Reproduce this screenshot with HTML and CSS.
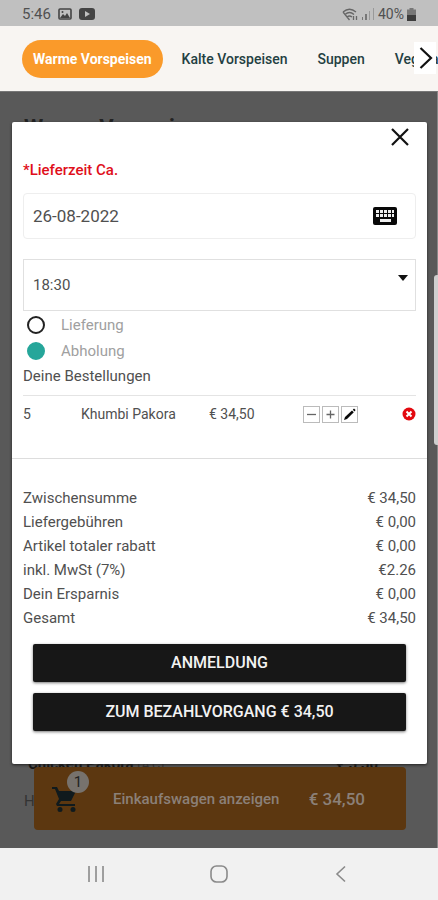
FILE: index.html
```html
<!DOCTYPE html>
<html lang="de">
<head>
<meta charset="utf-8">
<meta name="viewport" content="width=device-width, initial-scale=1">
<title>Warenkorb</title>
<link rel="stylesheet" href="styles.css">
</head>
<body>
<header class="status">
  <div class="status-group">
    <span class="clock">5:46</span>
    <svg width="14" height="12" viewBox="0 0 14 12"><rect x="1" y="1" width="12" height="10" rx="1" fill="none" stroke="#444" stroke-width="1.6"/><path d="M2 10l3-4 2 2 2-3 3 5z" fill="#444"/><circle cx="4.500" cy="4" r="1" fill="#444"/></svg>
    <svg width="16" height="12" viewBox="0 0 16 12"><rect width="16" height="12" rx="3" fill="#444"/><path d="M6 3l5 3-5 3z" fill="#c0c0c0"/></svg>
  </div>
  <div class="status-group status-right">
    <svg width="16" height="13" viewBox="0 0 16 13" fill="none" stroke="#666" stroke-width="1.300"><path d="M1 4Q7.500-1.500 14 4M3 6.500q4.500-4 9 0M5 9q2.500-2 5 0M7.500 12L1 4M11.500 8v4M14.500 8v4"/></svg>
    <svg width="14" height="12" viewBox="0 0 14 12" fill="#777"><rect x="1" y="9" width="1" height="3"/><rect x="4" y="6" width="2" height="6"/><rect x="8" y="3" width="1" height="9" fill="#999"/><rect x="12" y="0" width="1" height="12" fill="#999"/></svg>
    <span class="battery">40%</span>
    <svg width="9" height="13" viewBox="0 0 9 13"><path d="M2.500 0h4v1.500H9V13H0V1.500h2.500z" fill="#777"/><path d="M0 7h9v6H0z" fill="#3c3c3c"/></svg>
  </div>
</header>
<nav class="tabs">
  <a class="tab tab-active" href="#warm">Warme Vorspeisen</a>
  <a class="tab" href="#kalt">Kalte Vorspeisen</a>
  <a class="tab" href="#suppen">Suppen</a>
  <a class="tab" href="#veg">Vegetarische</a>
  <button class="tabs-next" type="button" aria-label="Weiter"><svg width="14" height="24" viewBox="0 0 14 24"><path d="M1.500 2l10.500 10L1.500 22" fill="none" stroke="#111" stroke-width="2.200"/></svg></button>
</nav>
<main class="stage">
  <section class="menu">
    <h1 class="menu-title">Warme Vorspeisen</h1>
    <div class="menu-end">
      <p class="dish"><b>Chicken Pakora <small>(A,C)</small></b><b>€ 5,50</b></p>
      <p class="dish-note">Hühnerfleisch</p>
    </div>
    <a class="cart" href="#cart">
      <span class="cart-icon">
        <svg width="28" height="28" viewBox="0 0 28 28"><path d="M1 2h5l2 4h17l-5 10H10l-2 3h16v2H6l-1-2 3-5L4 4H1z" fill="#101a1d"/><circle cx="9" cy="24.500" r="2.500" fill="#101a1d"/><circle cx="22" cy="24.500" r="2.500" fill="#101a1d"/></svg>
        <span class="badge">1</span>
      </span>
      <span class="cart-label">Einkaufswagen anzeigen</span>
      <span class="cart-sum">€ 34,50</span>
    </a>
  </section>
  <div class="scroll-thumb"></div>
  <form class="dialog" role="dialog" aria-label="Bestellung">
    <button class="close" type="button" aria-label="Schließen"><svg width="20" height="20" viewBox="0 0 20 20"><path d="M2 2l16 16M18 2L2 18" stroke="#111" stroke-width="2.200"/></svg></button>
    <label class="due" for="date">*Lieferzeit Ca.</label>
    <div class="date-box">
      <input class="date" id="date" type="text" value="26-08-2022">
      <button class="plain" type="button" aria-label="Tastatur"><svg width="26" height="18" viewBox="0 0 26 18"><rect x="1" width="24" height="18" rx="2" fill="#080808"/><path d="M4 3h3v3H4zM8 3h3v3H8zM12 3h3v3h-3zM16 3h3v3h-3zM20 3h2v3h-2zM4 7h3v3H4zM8 7h3v3H8zM12 7h3v3h-3zM16 7h3v3h-3zM20 7h2v3h-2zM8 12h11v3H8z" fill="#eee"/></svg></button>
    </div>
    <div class="time-box">
      <select class="time" aria-label="Uhrzeit"><option>18:30</option></select>
      <svg class="caret" width="10" height="6" viewBox="0 0 10 6"><path d="M0 0h10L5 6z" fill="#111"/></svg>
    </div>
    <label class="choice"><input type="radio" name="art">Lieferung</label>
    <label class="choice"><input type="radio" name="art" checked>Abholung</label>
    <h2 class="orders-title">Deine Bestellungen</h2>
    <div class="order">
      <span>5</span><span>Khumbi Pakora</span><span>€ 34,50</span>
      <span class="tools">
        <button type="button" aria-label="Weniger"><svg width="15" height="15" viewBox="0 0 15 15"><path d="M3 7.500h9" stroke="#666" stroke-width="1.300"/></svg></button>
        <button type="button" aria-label="Mehr"><svg width="15" height="15" viewBox="0 0 15 15"><path d="M3.500 7.500h8M7.500 3.500v8" stroke="#666" stroke-width="1.300"/></svg></button>
        <button type="button" aria-label="Bearbeiten"><svg width="15" height="15" viewBox="0 0 15 15"><path d="M2 13l1-3L10 3.500 11.800 5.300 5 12zM10.800 2.700L12 1.500 13.600 3.100 12.500 4.500z" fill="#080808"/></svg></button>
      </span>
      <button class="plain remove" type="button" aria-label="Entfernen"><svg width="14" height="14" viewBox="0 0 14 14"><circle cx="7" cy="7" r="6.500" fill="#e3090f"/><path d="M4.500 4.500l5 5M9.500 4.500l-5 5" stroke="#fff" stroke-width="2"/></svg></button>
    </div>
    <dl class="totals">
      <dt>Zwischensumme</dt><dd>€ 34,50</dd>
      <dt>Liefergebühren</dt><dd>€ 0,00</dd>
      <dt>Artikel totaler rabatt</dt><dd>€ 0,00</dd>
      <dt>inkl. MwSt (7%)</dt><dd>€2.26</dd>
      <dt>Dein Ersparnis</dt><dd>€ 0,00</dd>
      <dt>Gesamt</dt><dd>€ 34,50</dd>
    </dl>
    <div class="actions">
      <button class="action" type="button">ANMELDUNG</button>
      <button class="action" type="button">ZUM BEZAHLVORGANG € 34,50</button>
    </div>
  </form>
</main>
<footer class="system">
  <button class="plain" type="button" aria-label="Letzte Apps"><svg width="18" height="18" viewBox="0 0 18 18"><path d="M2 1v16M9 1v16M16 1v16" stroke="#8a8a8a" stroke-width="1.600"/></svg></button>
  <button class="plain" type="button" aria-label="Startseite"><svg width="18" height="18" viewBox="0 0 18 18"><rect x="1" y="1" width="16" height="16" rx="5.500" fill="none" stroke="#8a8a8a" stroke-width="1.600"/></svg></button>
  <button class="plain" type="button" aria-label="Zurück"><svg width="18" height="18" viewBox="0 0 18 18"><path d="M13 1.500L5 9l8 7.500" fill="none" stroke="#8a8a8a" stroke-width="1.600"/></svg></button>
</footer>
</body>
</html>
```
FILE: styles.css
```css
* { box-sizing: border-box; }
body {
  margin: 0;
  min-height: 100vh;
  display: flex;
  flex-direction: column;
  overflow-x: hidden;
  font: 15px/24px Roboto, "Liberation Sans", sans-serif;
  color: #505050;
  background: #fff;
}
svg { display: block; flex: none; }
button, input, select { font: inherit; color: inherit; }
.plain { border: 0; padding: 0; background: none; }

.status {
  display: flex;
  justify-content: space-between;
  align-items: center;
  height: 26px;
  padding: 2px 22px 0;
  background: #c0c0c0;
}
.status-group { display: flex; align-items: center; gap: 7px; color: #505050; }
.status-right { gap: 3px; }
.battery { font-size: 14px; }

.tabs {
  position: relative;
  display: flex;
  align-items: center;
  height: 65px;
  padding-left: 22px;
  overflow: hidden;
  background: #f8f5f2;
}
.tab {
  flex: none;
  padding: 0 11px;
  margin-right: 8px;
  border-radius: 19px;
  line-height: 38px;
  font-size: 14px;
  font-weight: 500;
  color: #243f42;
  text-decoration: none;
}
.tab-active { background: #fa9a2a; color: #fff; font-weight: 700; }
.tabs-next {
  position: absolute;
  top: 16px;
  right: 2px;
  width: 22px;
  height: 32px;
  padding: 0 5px;
  border: 0;
  background: #fff;
}

.stage { position: relative; flex: 1; display: flex; flex-direction: column; background: #595959; }
.menu {
  flex: 1;
  display: flex;
  flex-direction: column;
  padding: 22px 31px 18px 24px;
  border-top: 1px solid #777;
  border-right: 1px solid #888;
}
.menu-title { margin: 0; font-size: 22px; line-height: 28px; color: #222; }
.menu-end { margin: auto 0 0; }
.dish { display: flex; justify-content: space-between; margin: 0 0 12px 4px; padding-right: 28px; line-height: 24px; color: #161616; }
.dish small { color: #333; font-weight: 400; }
.dish-note { margin: 0; color: #333; }
.cart {
  display: flex;
  align-items: center;
  margin: -46px 0 0 10px;
  height: 63px;
  padding: 0 41px 0 17px;
  border-radius: 4px;
  background: #5c3710;
  color: #8b8078;
  text-decoration: none;
  font-weight: 500;
}
.cart-icon { position: relative; margin-right: 34px; }
.badge {
  position: absolute;
  top: -14px;
  left: 16px;
  width: 22px;
  border-radius: 11px;
  background: #77726d;
  color: #222;
  font-weight: 400;
  line-height: 22px;
  text-align: center;
}
.cart-label { flex: 1; }
.cart-sum { font-size: 17px; }
.scroll-thumb {
  position: absolute;
  top: 184px;
  right: 0;
  width: 4px;
  height: 170px;
  border-radius: 3px 0 0 3px;
  background: #cfcfcf;
}

.dialog {
  position: absolute;
  top: 31px;
  left: 12px;
  right: 11px;
  display: flex;
  flex-direction: column;
  padding: 5px 11px 33px;
  border-radius: 2px;
  background: #fff;
  box-shadow: 0 1px 3px #222;
}
.close { align-self: flex-end; margin: 0 6px 0 0; padding: 0; border: 0; background: none; }
.due { margin: 11px 0; font-weight: 500; color: #e00f1b; }
.date-box {
  display: flex;
  align-items: center;
  height: 46px;
  margin-bottom: 20px;
  padding: 0 17px 0 9px;
  border: 1px solid #eee;
  border-radius: 4px;
}
.date { flex: 1; min-width: 0; padding: 0; border: 0; outline: 0; background: none; font-size: 17px; }
.time-box { position: relative; margin-bottom: 1px; }
.time {
  display: block;
  width: 100%;
  height: 52px;
  padding: 0 9px;
  border: 1px solid #e0e0e0;
  border-radius: 0;
  background: #fff;
  appearance: none;
}
.caret { position: absolute; top: 16px; right: 8px; pointer-events: none; }
.choice { display: flex; align-items: center; gap: 16px; height: 26px; padding-left: 4px; color: #a0a0a0; }
.choice input {
  appearance: none;
  width: 18px;
  height: 18px;
  margin: 0;
  border: 2px solid #222;
  border-radius: 50%;
}
.choice input:checked { border-color: #26a69a; background: #26a69a; }
.orders-title { margin: 0 0 7px; font-size: 15px; font-weight: 400; }
.order {
  display: grid;
  grid-template-columns: 58px 128px 94px auto 1fr;
  align-items: center;
  height: 63px;
  padding-bottom: 26px;
  border-top: 1px solid #e4e4e4;
  font-size: 14px;
}
.tools { display: flex; gap: 2px; }
.tools button { padding: 0; border: 1px solid #bbb; background: #fff; }
.remove { justify-self: end; }
.totals {
  display: grid;
  grid-template-columns: 1fr auto;
  margin: 0 -11px;
  padding: 27px 11px 0;
  border-top: 1px solid #ddd;
}
.totals dd { margin: 0; text-align: right; }
.actions { display: flex; flex-direction: column; gap: 11px; padding: 14px 10px 0; }
.action {
  height: 38px;
  padding: 0;
  border: 0;
  border-radius: 2px;
  background: #171717;
  color: #f2f2f2;
  font-size: 16px;
  font-weight: 500;
  box-shadow: 0 1px 3px #777;
}

.system {
  display: flex;
  justify-content: space-between;
  align-items: center;
  height: 52px;
  padding: 0 88px 0 87px;
  background: #f1f1f1;
}
```
